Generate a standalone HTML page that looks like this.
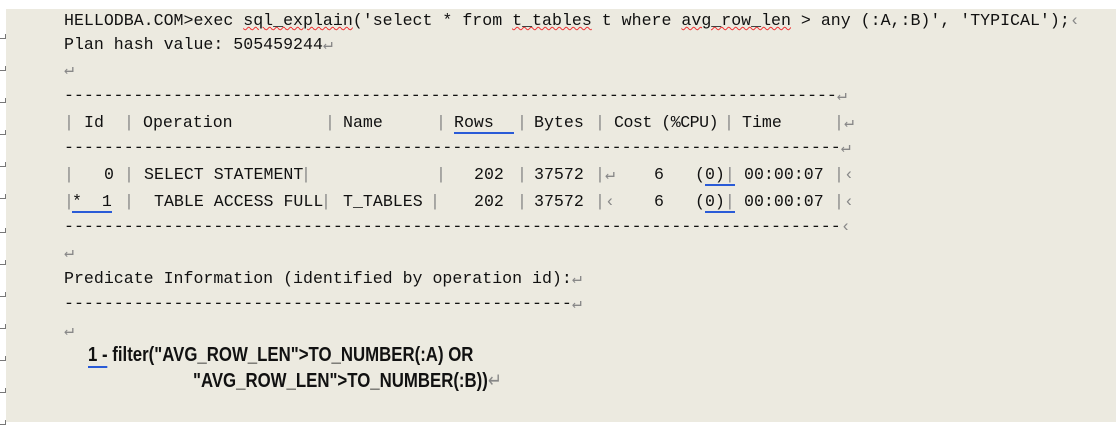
<html><head><style>
body{margin:0;width:1116px;height:430px;background:#fff;position:relative;overflow:hidden;font-family:"Liberation Mono","Noto Serif CJK SC",monospace;font-size:16.6px;color:#111}
#bg{position:absolute;left:6px;top:9px;width:1110px;height:413px;background:#ecEAE0}
.l{position:absolute;white-space:pre;line-height:20px}
.g{color:#888}
.sq{text-decoration:underline wavy #e33;text-decoration-thickness:1px}
.bu{border-bottom:2px double #2a5bd7}
.b{font-family:"Liberation Sans",sans-serif;font-weight:bold;font-size:20px;transform:scaleX(.84);transform-origin:left}
.m{position:absolute;left:0;width:5px;height:4px;border-right:1px solid #777;border-bottom:1px solid #777}
</style></head><body>
<div id="bg"></div>
<div class="m" style="top:34px"></div><div class="m" style="top:66px"></div><div class="m" style="top:98px"></div><div class="m" style="top:130px"></div><div class="m" style="top:162px"></div><div class="m" style="top:194px"></div><div class="m" style="top:228px"></div><div class="m" style="top:260px"></div><div class="m" style="top:292px"></div><div class="m" style="top:324px"></div><div class="m" style="top:356px"></div><div class="m" style="top:388px"></div><div class="m" style="top:420px"></div>
<div class="l" style="left:64px;top:11px">HELLODBA.COM&gt;exec <span class="sq">sql_explain</span>('select * from <span class="sq">t_tables</span> t where <span class="sq">avg_row_len</span> &gt; any (:A,:B)', 'TYPICAL');<span class="g">‹</span></div>
<div class="l" style="left:64px;top:35px">Plan hash value: 505459244<span class="g">↵</span></div>
<div class="l g" style="left:64px;top:60px">↵</div>
<div class="l" style="left:64px;top:86px;letter-spacing:-.05px">------------------------------------------------------------------------------<span class="g">↵</span></div>
<div class="l" style="left:64px;top:113px"><span class="g">|</span></div>
<div class="l" style="left:84px;top:113px">Id</div>
<div class="l g" style="left:124px;top:113px">|</div>
<div class="l" style="left:143px;top:113px">Operation</div>
<div class="l g" style="left:325px;top:113px">|</div>
<div class="l" style="left:343px;top:113px">Name</div>
<div class="l g" style="left:436px;top:113px">|</div>
<div class="l" style="left:454px;top:113px"><span class="bu">Rows&nbsp;&nbsp;</span></div>
<div class="l g" style="left:517px;top:113px">|</div>
<div class="l" style="left:534px;top:113px">Bytes</div>
<div class="l g" style="left:595px;top:113px">|</div>
<div class="l" style="left:614px;top:113px;letter-spacing:-.5px">Cost (%CPU)</div>
<div class="l g" style="left:724px;top:113px">|</div>
<div class="l" style="left:742px;top:113px">Time</div>
<div class="l g" style="left:834px;top:113px">|↵</div>
<div class="l" style="left:64px;top:138px">------------------------------------------------------------------------------<span class="g">↵</span></div>
<div class="l g" style="left:64px;top:165px">|</div>
<div class="l" style="left:104px;top:165px">0</div>
<div class="l g" style="left:124px;top:165px">|</div>
<div class="l" style="left:144px;top:165px">SELECT STATEMENT</div>
<div class="l g" style="left:301px;top:165px">|</div>
<div class="l g" style="left:436px;top:165px">|</div>
<div class="l" style="left:474px;top:165px">202</div>
<div class="l g" style="left:517px;top:165px">|</div>
<div class="l" style="left:534px;top:165px">37572</div>
<div class="l g" style="left:595px;top:165px">|↵</div>
<div class="l" style="left:654px;top:165px">6</div>
<div class="l" style="left:695px;top:165px">(<span class="bu">0)<span class="g">|</span></span></div>
<div class="l" style="left:744px;top:165px">00:00:07</div>
<div class="l g" style="left:834px;top:165px">|‹</div>
<div class="l g" style="left:64px;top:192px">|</div>
<div class="l" style="left:72px;top:192px"><span class="bu">*&nbsp;&nbsp;1</span></div>
<div class="l g" style="left:124px;top:192px">|</div>
<div class="l" style="left:154px;top:192px">TABLE ACCESS FULL</div>
<div class="l g" style="left:321px;top:192px">|</div>
<div class="l" style="left:343px;top:192px">T_TABLES</div>
<div class="l g" style="left:430px;top:192px">|</div>
<div class="l" style="left:474px;top:192px">202</div>
<div class="l g" style="left:517px;top:192px">|</div>
<div class="l" style="left:534px;top:192px">37572</div>
<div class="l g" style="left:595px;top:192px">|‹</div>
<div class="l" style="left:654px;top:192px">6</div>
<div class="l" style="left:695px;top:192px">(<span class="bu">0)<span class="g">|</span></span></div>
<div class="l" style="left:744px;top:192px">00:00:07</div>
<div class="l g" style="left:834px;top:192px">|‹</div>
<div class="l" style="left:64px;top:217px">------------------------------------------------------------------------------<span class="g">‹</span></div>
<div class="l g" style="left:64px;top:243px">↵</div>
<div class="l" style="left:64px;top:269px">Predicate Information (identified by operation id):<span class="g">↵</span></div>
<div class="l" style="left:64px;top:294px">---------------------------------------------------<span class="g">↵</span></div>
<div class="l g" style="left:64px;top:321px">↵</div>
<div class="l b" style="left:88px;top:345px"><span class="bu">1 -</span> filter("AVG_ROW_LEN"&gt;TO_NUMBER(:A) OR</div>
<div class="l b" style="left:193px;top:371px">"AVG_ROW_LEN"&gt;TO_NUMBER(:B))<span class="g" style="font-weight:normal">↵</span></div>
</body></html>
